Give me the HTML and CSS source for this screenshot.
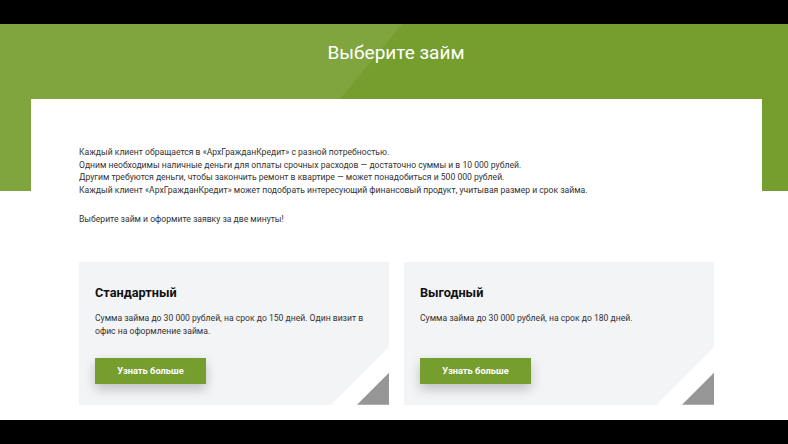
FILE: index.html
```html
<!DOCTYPE html>
<html lang="ru">
<head>
<meta charset="utf-8">
<title>Выберите займ</title>
<link rel="stylesheet" href="styles.css">
</head>
<body>
<div class="frame">
  <section class="loans">
    <h1 class="loans-title">Выберите займ</h1>
    <div class="panel">
      <p class="intro">Каждый клиент обращается в «АрхГражданКредит» с разной потребностью.<br>
Одним необходимы наличные деньги для оплаты срочных расходов — достаточно суммы и в 10 000 рублей.<br>
Другим требуются деньги, чтобы закончить ремонт в квартире — может понадобиться и 500 000 рублей.<br>
Каждый клиент «АрхГражданКредит» может подобрать интересующий финансовый продукт, учитывая размер и срок займа.</p>
      <p class="intro intro-cta">Выберите займ и оформите заявку за две минуты!</p>
      <div class="cards">
        <div class="card">
          <h2 class="card-title">Стандартный</h2>
          <p class="card-text">Сумма займа до 30 000 рублей, на срок до 150 дней. Один визит в офис на оформление займа.</p>
          <a class="btn" href="#">Узнать больше</a>
        </div>
        <div class="card">
          <h2 class="card-title">Выгодный</h2>
          <p class="card-text">Сумма займа до 30 000 рублей, на срок до 180 дней.</p>
          <a class="btn" href="#">Узнать больше</a>
        </div>
      </div>
    </div>
  </section>
</div>
</body>
</html>
```
FILE: styles.css
```css
html, body {
  margin: 0;
  padding: 0;
  background: #000;
}
body {
  padding-top: 24px;
  font-family: Roboto, "Noto Sans", "Liberation Sans", sans-serif;
}
.frame {
  height: 396px;
  overflow: hidden;
  background: #fff;
}
.loans {
  position: relative;
  background: linear-gradient(to bottom, #769e2e 0, #769e2e 167px, #fff 167px);
  padding: 0 26px 0 31px;
}
.loans::before {
  content: "";
  position: absolute;
  left: 0;
  top: 0;
  width: 420px;
  height: 167px;
  background: #80a53e;
  clip-path: polygon(0 0, 402px 0, 264px 167px, 0 167px);
}
.loans-title {
  position: relative;
  height: 58px;
  box-sizing: border-box;
  margin: 0 -26px 17px -31px;
  padding: 17px 0 0 4px;
  text-align: center;
  color: #fff;
  font-weight: 400;
  font-size: 19px;
  line-height: 24px;
}
.panel {
  position: relative;
  background: #fff;
  padding: 47px 48px 40px;
}
.intro {
  margin: 0;
  font-size: 8.6px;
  line-height: 12.6px;
  color: #333;
}
.intro-cta {
  margin-top: 16.4px;
}
.cards {
  display: grid;
  grid-template-columns: 310px 310px;
  gap: 15px;
  margin-top: 36.5px;
}
.card {
  position: relative;
  height: 143px;
  box-sizing: border-box;
  background: #f3f4f6;
  padding: 23px 16px 21px;
  display: flex;
  flex-direction: column;
  align-items: flex-start;
  overflow: hidden;
}
.card::before {
  content: "";
  position: absolute;
  right: 0;
  bottom: 0;
  width: 58px;
  height: 58px;
  background: #fff;
  clip-path: polygon(100% 0, 100% 100%, 0 100%);
}
.card::after {
  content: "";
  position: absolute;
  right: 0;
  bottom: 0;
  width: 32px;
  height: 32px;
  background: #969696;
  clip-path: polygon(100% 0, 100% 100%, 0 100%);
}
.card-title {
  margin: 0;
  font-size: 12.7px;
  line-height: 16px;
  font-weight: 700;
  color: #111;
}
.card-text {
  margin: 11.5px 0 0;
  font-size: 8.6px;
  line-height: 13px;
  color: #333;
}
.btn {
  margin-top: auto;
  width: 111px;
  height: 26px;
  display: flex;
  align-items: center;
  justify-content: center;
  background: #769e2e;
  color: #fff;
  text-decoration: none;
  font-size: 9.3px;
  font-weight: 700;
  box-shadow: 0 5px 12px rgba(0, 0, 0, 0.22);
}
```
